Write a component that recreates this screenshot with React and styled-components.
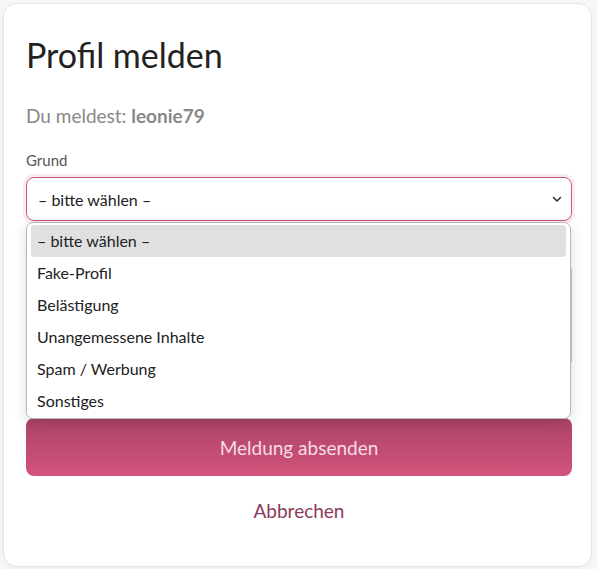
import React from "react";
import styled, { createGlobalStyle } from "styled-components";

const GlobalStyle = createGlobalStyle`
  body {
    margin: 0;
    background: #f7f7f7;
    font-family: "Segoe UI", Lato, "Noto Sans", sans-serif;
  }
`;

const Page = styled.div`
  padding: 3px 5px 3px 3px;
`;

const Card = styled.div`
  background: #fff;
  border: 1px solid #e6e6e6;
  border-radius: 14px;
  padding: 22px 19px 42px 22px;
  box-shadow: 0 2px 6px rgba(0, 0, 0, 0.04);
`;

const Title = styled.h1`
  margin: 9px 0 0;
  font-size: 34px;
  font-weight: 400;
  color: #222;
  line-height: 40px;
`;

const Reporting = styled.p`
  margin: 29px 0 0;
  font-size: 19px;
  color: #888;
  line-height: 24px;
  strong {
    font-weight: 700;
  }
`;

const Label = styled.div`
  margin-top: 22px;
  font-size: 15px;
  color: #555;
  line-height: 20px;
`;

const Field = styled.div`
  position: relative;
  margin-top: 7px;
`;

const Select = styled.div`
  height: 44px;
  box-sizing: border-box;
  border: 1px solid #c4567e;
  border-radius: 8px;
  box-shadow: 0 0 0 3px rgba(214, 90, 130, 0.12);
  display: flex;
  align-items: center;
  justify-content: space-between;
  padding: 0 8px 0 11px;
  font-size: 16px;
  color: #222;
`;

const Dropdown = styled.ul`
  position: absolute;
  top: 45px;
  left: 0;
  right: 1px;
  margin: 0;
  padding: 2px 4px 1px;
  list-style: none;
  background: #fff;
  border: 1px solid #b8b8b8;
  border-radius: 7px;
  box-shadow: 0 4px 14px rgba(0, 0, 0, 0.14);
  z-index: 2;
`;

const Option = styled.li`
  height: 32px;
  line-height: 32px;
  padding: 0 6px;
  font-size: 16px;
  color: #222;
  border-radius: 3px;
  background: ${(p) => (p.$active ? "#e0e0e0" : "transparent")};
`;

const TextArea = styled.div`
  margin-top: 42px;
  height: 103px;
  border: 1px solid #c8c8c8;
  border-radius: 8px;
`;

const Submit = styled.button`
  display: block;
  width: 100%;
  margin-top: 50px;
  height: 58px;
  border: 0;
  border-radius: 8px;
  background: linear-gradient(180deg, #ac4466 0%, #d2537b 100%);
  color: #f6dce6;
  font-family: inherit;
  font-size: 19px;
`;

const Cancel = styled.button`
  display: block;
  margin: 22px auto 0;
  padding: 0 6px;
  background: none;
  border: 0;
  color: #8c3a5b;
  font-family: inherit;
  font-size: 19px;
  line-height: 26px;
`;

const options = [
  "– bitte wählen –",
  "Fake-Profil",
  "Belästigung",
  "Unangemessene Inhalte",
  "Spam / Werbung",
  "Sonstiges",
];

const Chevron = () => (
  <svg width="12" height="12" viewBox="0 0 12 12" fill="none">
    <path d="M2.5 4.5 6 8l3.5-3.5" stroke="#333" strokeWidth="1.6" strokeLinecap="round" strokeLinejoin="round" />
  </svg>
);

export default function App() {
  return (
    <Page>
      <GlobalStyle />
      <Card>
        <Title>Profil melden</Title>
        <Reporting>
          Du meldest: <strong>leonie79</strong>
        </Reporting>
        <Label>Grund</Label>
        <Field>
          <Select>
            <span>{options[0]}</span>
            <Chevron />
          </Select>
          <Dropdown>
            {options.map((o, i) => (
              <Option key={o} $active={i === 0}>
                {o}
              </Option>
            ))}
          </Dropdown>
        </Field>
        <TextArea />
        <Submit>Meldung absenden</Submit>
        <Cancel>Abbrechen</Cancel>
      </Card>
    </Page>
  );
}
